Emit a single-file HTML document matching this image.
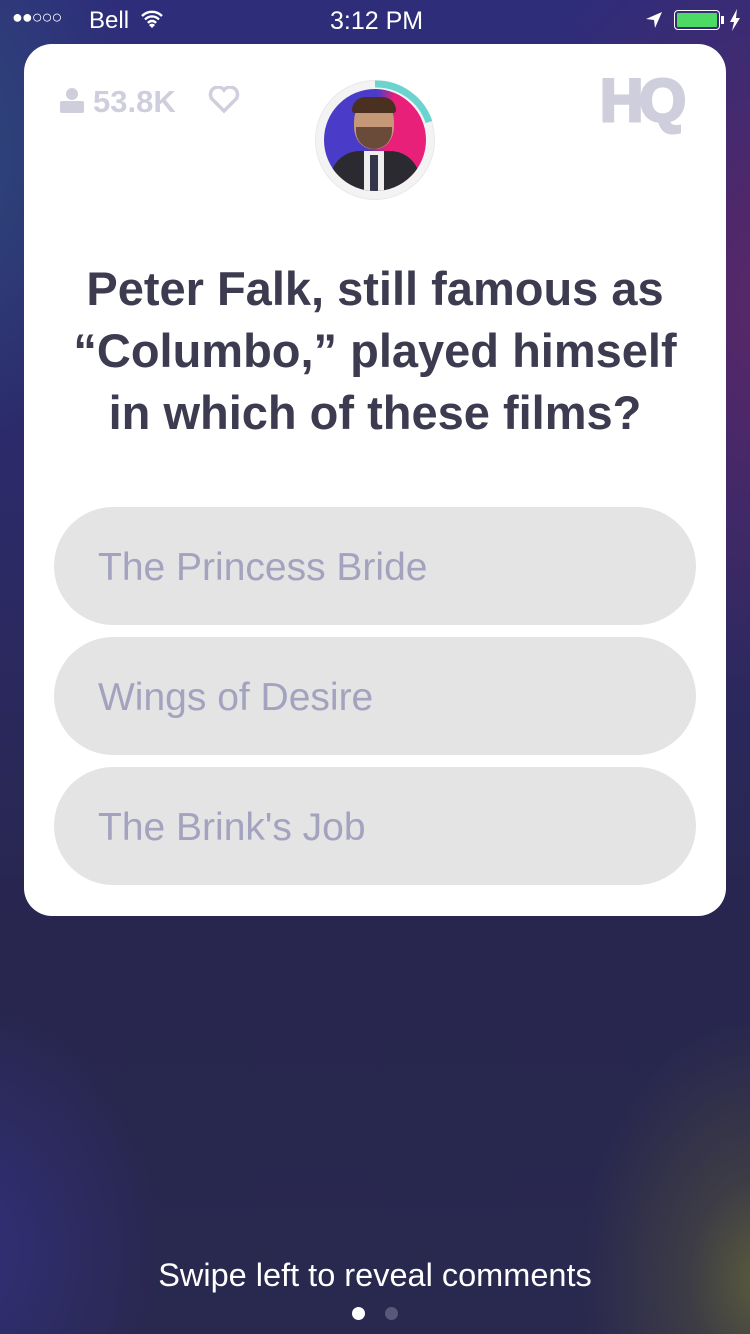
<!DOCTYPE html>
<html><head><meta charset="utf-8"><style>
*{margin:0;padding:0;box-sizing:border-box}
body{width:750px;height:1334px;overflow:hidden;font-family:"Liberation Sans",sans-serif;position:relative;
background:
radial-gradient(ellipse 180px 260px at 760px 1280px,#5a5a3c 0%,rgba(80,80,60,.5) 40%,rgba(42,40,80,0) 100%),
radial-gradient(ellipse 300px 400px at 780px 300px,#5a2768 0%,rgba(90,39,104,0) 100%),
radial-gradient(ellipse 200px 300px at -60px 150px,#2d4a7a 0%,rgba(45,74,122,0) 100%),
radial-gradient(ellipse 200px 250px at -40px 1250px,#32307a 0%,rgba(50,48,122,0) 100%),
linear-gradient(180deg,#2e2d7a 0%,#2c2a66 40%,#28264e 70%,#29284f 100%);}
.sb{position:absolute;top:0;left:0;width:750px;height:40px;color:#fff;font-size:24px}
.card{position:absolute;left:24px;top:44px;width:702px;height:872px;background:#fff;border-radius:28px}
.q{position:absolute;left:0;top:258px;width:750px;text-align:center;font-weight:bold;font-size:47px;line-height:62px;color:#3c3b50}
.a{position:absolute;left:54px;width:642px;height:118px;border-radius:59px;background:#e4e4e4;color:#a3a2bf;font-size:39px;line-height:122px;padding-left:44px}
</style></head><body>
<div class="sb">
<span style="position:absolute;left:12px;top:7px;font-size:18px;letter-spacing:-1px">●●○○○</span>
<span style="position:absolute;left:89px;top:7px">Bell</span>
<svg style="position:absolute;left:140px;top:9px" width="24" height="20" viewBox="0 0 24 20"><path d="M2 7a14 14 0 0 1 20 0M5 10.5a9.5 9.5 0 0 1 14 0M8 14a5 5 0 0 1 8 0" stroke="#fff" stroke-width="2.4" fill="none"/><path d="M12 19l-3-3a4 4 0 0 1 6 0z" fill="#fff"/></svg>
<span style="position:absolute;left:330px;top:7px;font-size:25px">3:12 PM</span>
<svg style="position:absolute;left:644px;top:10px" width="20" height="20" viewBox="0 0 20 20"><path d="M18 2L2 9l8 1 1 8z" fill="#fff"/></svg>
<div style="position:absolute;left:674px;top:10px;width:46px;height:20px;border:1.5px solid #fff;border-radius:4px;padding:2px"><div style="width:100%;height:100%;background:#4cd964;border-radius:1px"></div></div>
<div style="position:absolute;left:721px;top:16px;width:3px;height:8px;background:#fff"></div>
<svg style="position:absolute;left:729px;top:9px" width="12" height="22" viewBox="0 0 12 22"><path d="M8 0L1 13h4l-2 9 8-13H7z" fill="#fff"/></svg>
</div>
<div class="card"></div>
<svg style="position:absolute;left:60px;top:87px" width="24" height="26" viewBox="0 0 24 26"><circle cx="12" cy="7" r="6" fill="#cfcedc"/><rect x="0" y="14" width="24" height="12" rx="2" fill="#cfcedc"/></svg>
<span style="position:absolute;left:93px;top:84px;font-size:31px;font-weight:bold;color:#cfcedc">53.8K</span>
<svg style="position:absolute;left:208px;top:86px" width="32" height="28" viewBox="0 0 32 28"><path d="M16 25L4 13a7 7 0 0 1 12-9 7 7 0 0 1 12 9z" fill="none" stroke="#cfcedc" stroke-width="3.5"/></svg>
<span style="position:absolute;left:600px;top:66px;font-size:60px;font-weight:900;color:#cfcedc;letter-spacing:-4px;-webkit-text-stroke:3px #cfcedc">HQ</span>
<div style="position:absolute;left:315px;top:80px;width:120px;height:120px;border-radius:50%;background:#f3f3f3;border:1px solid #e8e8e8"></div>
<svg style="position:absolute;left:315px;top:80px" width="120" height="120" viewBox="0 0 120 120"><path d="M60 4A56 56 0 0 1 114 42" stroke="#6bd4cf" stroke-width="7" fill="none"/></svg>
<div style="position:absolute;left:324px;top:89px;width:102px;height:102px;border-radius:50%;overflow:hidden;background:linear-gradient(100deg,#4a3cc8 45%,#e8207a 60%)">
<div style="position:absolute;left:30px;top:10px;width:40px;height:50px;border-radius:45%;background:#c59878"></div>
<div style="position:absolute;left:28px;top:8px;width:44px;height:16px;border-radius:20px 20px 4px 4px;background:#4a3020"></div>
<div style="position:absolute;left:32px;top:38px;width:36px;height:22px;border-radius:0 0 18px 18px;background:#6a4a38"></div>
<div style="position:absolute;left:6px;top:62px;width:90px;height:50px;border-radius:30px 30px 0 0;background:#2a2a30"></div>
<div style="position:absolute;left:40px;top:62px;width:20px;height:40px;background:#eee"></div>
<div style="position:absolute;left:46px;top:66px;width:8px;height:36px;background:#333648"></div>
</div>
<div class="q">Peter Falk, still famous as<br>“Columbo,” played himself<br>in which of these films?</div>
<div class="a" style="top:507px">The Princess Bride</div>
<div class="a" style="top:637px">Wings of Desire</div>
<div class="a" style="top:767px">The Brink's Job</div>
<div style="position:absolute;left:0;top:1257px;width:750px;text-align:center;color:#fff;font-size:32.5px">Swipe left to reveal comments</div>
<div style="position:absolute;left:352px;top:1307px;width:13px;height:13px;border-radius:50%;background:#fff"></div>
<div style="position:absolute;left:385px;top:1307px;width:13px;height:13px;border-radius:50%;background:#5a5878"></div>
</body></html>
